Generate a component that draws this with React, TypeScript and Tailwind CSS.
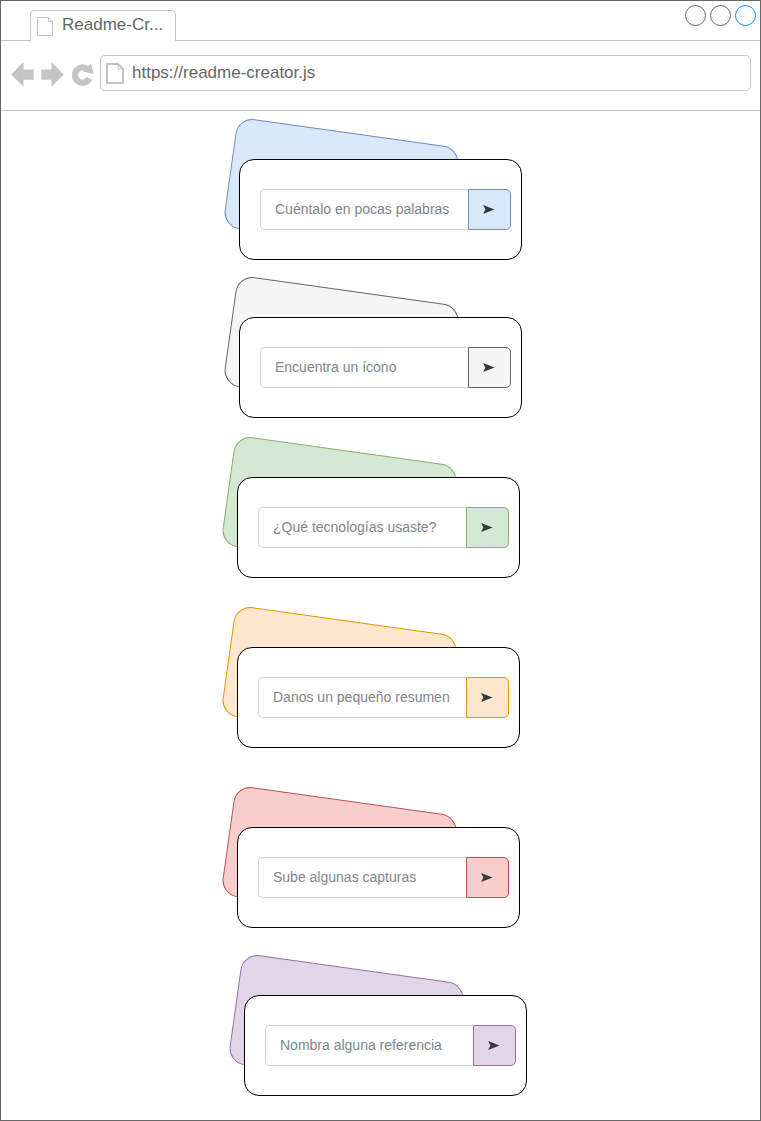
type Step = {
  text: string;
  place: string;
  tone: string;
};

const steps: Step[] = [
  {
    text: "Cuéntalo en pocas palabras",
    place: "ml-[238px] mt-[48px]",
    tone: "bg-[#dae8fc] border-[#6c8ebf]",
  },
  {
    text: "Encuentra un ícono",
    place: "ml-[238px] mt-[57px]",
    tone: "bg-[#f5f5f5] border-[#666666]",
  },
  {
    text: "¿Qué tecnologías usaste?",
    place: "ml-[236px] mt-[59px]",
    tone: "bg-[#d5e8d4] border-[#82b366]",
  },
  {
    text: "Danos un pequeño resumen",
    place: "ml-[236px] mt-[69px]",
    tone: "bg-[#ffe6cc] border-[#d79b00]",
  },
  {
    text: "Sube algunas capturas",
    place: "ml-[236px] mt-[79px]",
    tone: "bg-[#f8cecc] border-[#b85450]",
  },
  {
    text: "Nombra alguna referencia",
    place: "ml-[243px] mt-[67px]",
    tone: "bg-[#e1d5e7] border-[#9673a6]",
  },
];

function StepCard({ step }: { step: Step }) {
  return (
    <section className={`relative h-[101px] w-[283px] ${step.place}`}>
      <div
        className={`absolute -left-[10px] -top-[27px] h-[111px] w-[225px] rotate-[8deg] rounded-[17px] border ${step.tone}`}
      />
      <div className="relative flex h-full w-full rounded-[15px] border border-black bg-white pl-[20px] pt-[29px]">
        <div className="flex h-[41px] w-[208px] items-center rounded-l-[5px] border border-r-0 border-[#ced4da] pl-[14px] text-[14px] text-[#7d868c]">
          <span className="whitespace-nowrap">{step.text}</span>
        </div>
        <button
          className={`flex h-[41px] w-[43px] items-start rounded-r-[5px] border pl-[14px] pt-[15px] ${step.tone}`}
        >
          <svg className="h-[10px] w-[12px]" viewBox="0 0 12 10">
            <path d="M0.1 0L11.5 4.4L0.1 8.9L2.4 4.4Z" fill="#33393f" />
          </svg>
        </button>
      </div>
    </section>
  );
}

export default function App() {
  return (
    <div className="h-[1121px] w-[761px] overflow-hidden border border-[#666666] bg-white font-['Liberation_Sans',Arial,sans-serif]">
      <header>
        <div className="flex h-[40px] items-end border-b border-[#c4c4c4] pl-[29px]">
          <div className="-mb-px flex h-[31px] w-[146px] rounded-t-[5px] border border-b-0 border-[#c4c4c4] bg-white pl-[6px]">
            <svg
              className="mt-[6px] h-[19px] w-[17px]"
              viewBox="0 0 17 19"
              fill="none"
              stroke="#c4c4c4"
            >
              <path d="M0.5 0.5H11.5L15.5 4.5V18.5H0.5Z" />
              <path d="M11.5 0.5V4.5H15.5" />
            </svg>
            <span className="ml-[8px] mt-[1px] text-[17px] leading-[26px] text-[#666666]">Readme-Cr...</span>
          </div>
          <div className="ml-auto mr-[4px] flex gap-[4px] self-start pt-[4px]">
            <span className="h-[21px] w-[21px] rounded-full border border-[#666666]" />
            <span className="h-[21px] w-[21px] rounded-full border border-[#666666]" />
            <span className="h-[21px] w-[21px] rounded-full border border-[#008cff]" />
          </div>
        </div>
        <div className="flex h-[70px] border-b border-[#c4c4c4] pt-[14px]">
          <svg className="h-[36px] w-[99px]" viewBox="0 0 99 36" fill="#c4c4c4">
            <path d="M10.2 19.5L22.5 7V14.5H32.7V24.8H22.5V31.8Z" />
            <path d="M62.8 19.5L50.5 7V14.5H40.3V24.8H50.5V31.8Z" />
            <path
              d="M86.5 14.3A7.6 7.6 0 1 0 88.4 23.4"
              fill="none"
              stroke="#c4c4c4"
              strokeWidth="6.2"
            />
            <path d="M90 8.5L92.7 19L82 16.6Z" />
          </svg>
          <div className="flex h-[36px] w-[651px] rounded-[5px] border border-[#c4c4c4] pl-[5px]">
            <svg
              className="mt-[7px] h-[21px] w-[18px]"
              viewBox="0 0 18 21"
              fill="none"
              stroke="#c4c4c4"
            >
              <path d="M1 1H12.2L17 5.8V20H1Z" strokeWidth="2" />
              <path d="M12.2 1V5.8H17" />
            </svg>
            <span className="ml-[8px] mt-[4px] text-[17px] leading-[26px] text-[#666666]">
              https://readme-creator.js
            </span>
          </div>
        </div>
      </header>
      <main>
        {steps.map((step) => (
          <StepCard key={step.text} step={step} />
        ))}
      </main>
    </div>
  );
}
